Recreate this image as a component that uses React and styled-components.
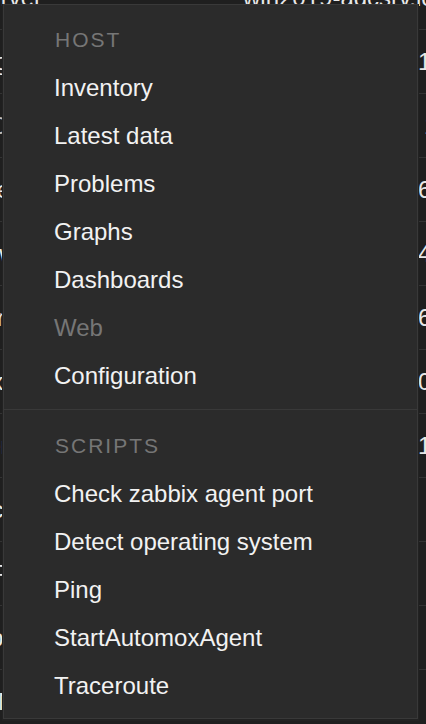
import React from 'react';
import styled, { createGlobalStyle } from 'styled-components';

const Global = createGlobalStyle`
  html, body {
    margin: 0;
    padding: 0;
    background: #1f1f1f;
    overflow: hidden;
  }
  body {
    font-family: "Liberation Sans", Arial, sans-serif;
  }
`;

const Page = styled.div`
  position: relative;
  width: 426px;
  height: 724px;
  overflow: hidden;
  background: #1f1f1f;
`;

const Table = styled.div`
  margin-top: -34px;
  display: flex;
  flex-direction: column;
`;

const Row = styled.div`
  display: grid;
  grid-template-columns: 240px 1fr;
  align-items: center;
  height: 64px;
  border-bottom: 1px solid #333;
  box-sizing: border-box;
  font-size: 24px;
  color: ${(p) => (p.$dim ? '#bdbdbd' : '#e8e8e8')};
  white-space: nowrap;
  overflow: hidden;
`;

const NameCell = styled.div`
  display: flex;
  justify-content: flex-end;
  overflow: hidden;
  padding-right: 198px;
`;

const ValueCell = styled.div`
  padding-left: ${(p) => p.$indent || 3}px;
  overflow: hidden;
`;

const Menu = styled.div`
  position: absolute;
  top: 4px;
  left: 3px;
  width: 415px;
  box-sizing: border-box;
  background: #2b2b2b;
  border: 1px solid #393939;
  box-shadow: 0 1px 0 1px #222;
  display: flex;
  flex-direction: column;
`;

const Section = styled.div`
  padding: ${(p) => (p.$first ? '11px 0 9px' : '12px 0 8px')};
  border-top: ${(p) => (p.$first ? 'none' : '1px solid #393939')};
  display: flex;
  flex-direction: column;
`;

const Header = styled.div`
  height: 48px;
  line-height: 48px;
  padding-left: 51px;
  font-size: 21px;
  letter-spacing: 2px;
  text-transform: uppercase;
  color: #767676;
`;

const Item = styled.a`
  display: block;
  height: 48px;
  line-height: 48px;
  padding-left: 50px;
  font-size: 24px;
  color: ${(p) => (p.$disabled ? '#767676' : '#f2f2f2')};
  text-decoration: none;
  cursor: ${(p) => (p.$disabled ? 'default' : 'pointer')};
  &:hover {
    background: ${(p) => (p.$disabled ? 'transparent' : '#333')};
  }
`;

const rows = [
  { name: 'Zabbix server', value: 'win2019-adcsrv.local' },
  { name: 'Zabbix agent', value: '10.10.20.5' },
  { name: 'Windows DNS', value: '10.10.20.7', indent: 6, dim: true },
  { name: 'Hyper-V', value: '65.21.4.11' },
  { name: 'Gateway', value: '45.10.1.1' },
  { name: 'Proxy', value: '65.21.4.12' },
  { name: 'Linux srv', value: '0.0.0.0' },
  { name: 'File server', value: '10.10.20.9' },
  { name: 'Backup', value: '' },
  { name: 'Print', value: '' },
  { name: 'Web srv', value: '' },
  { name: 'Mail', value: '' },
];

const host = [
  { label: 'Inventory' },
  { label: 'Latest data' },
  { label: 'Problems' },
  { label: 'Graphs' },
  { label: 'Dashboards' },
  { label: 'Web', disabled: true },
  { label: 'Configuration' },
];

const scripts = [
  'Check zabbix agent port',
  'Detect operating system',
  'Ping',
  'StartAutomoxAgent',
  'Traceroute',
];

export default function App() {
  return (
    <>
      <Global />
      <Page>
        <Table>
          {rows.map((r, i) => (
            <Row key={i} $dim={r.dim}>
              <NameCell>{r.name}</NameCell>
              <ValueCell $indent={i === 0 ? 3 : r.indent ? 178 + r.indent : 178}>
                {r.value}
              </ValueCell>
            </Row>
          ))}
        </Table>
        <Menu>
          <Section $first>
            <Header>Host</Header>
            {host.map((h) => (
              <Item key={h.label} $disabled={h.disabled}>
                {h.label}
              </Item>
            ))}
          </Section>
          <Section>
            <Header>Scripts</Header>
            {scripts.map((s) => (
              <Item key={s}>{s}</Item>
            ))}
          </Section>
        </Menu>
      </Page>
    </>
  );
}
